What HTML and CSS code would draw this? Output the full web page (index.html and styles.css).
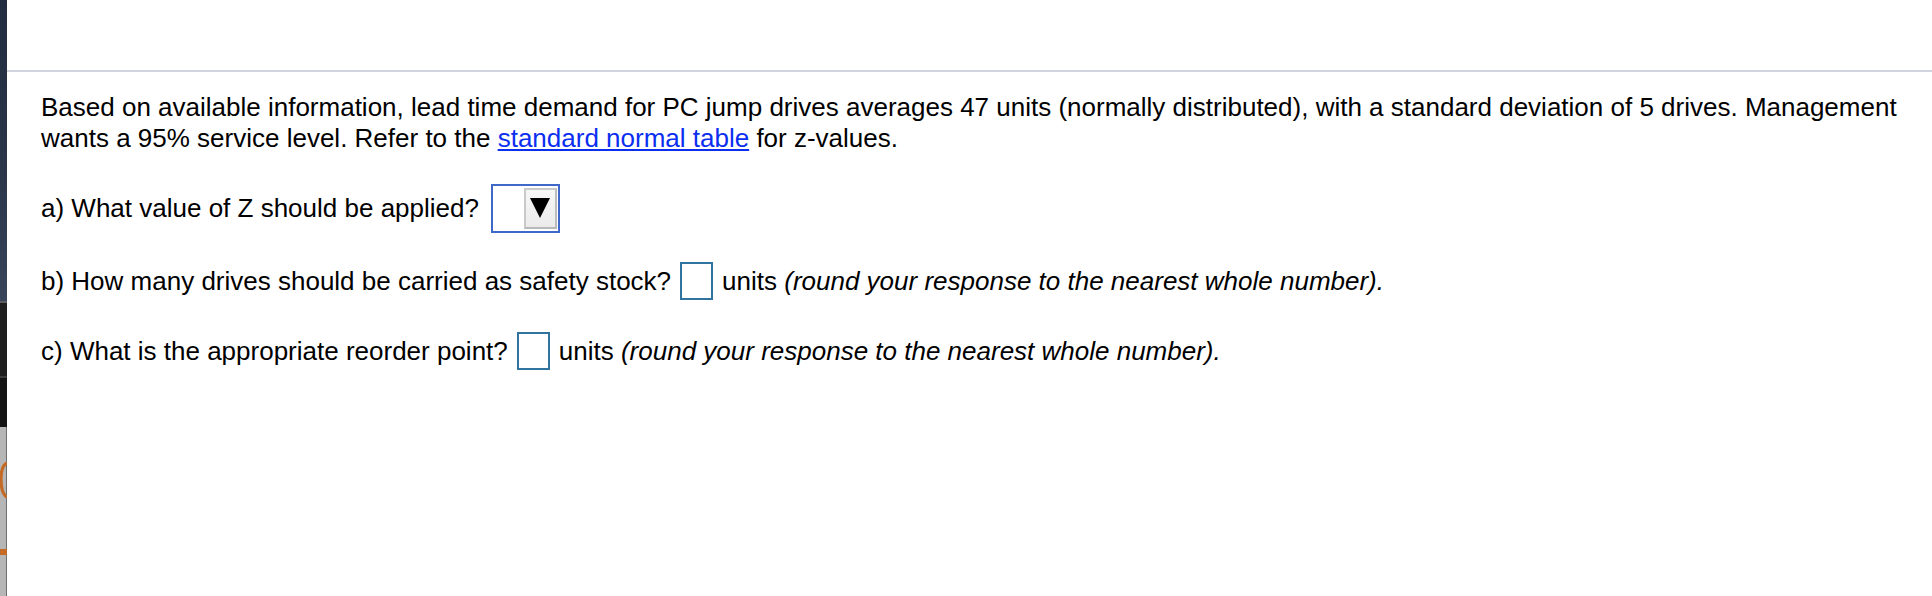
FILE: index.html
```html
<!DOCTYPE html>
<html lang="en">
<head>
<meta charset="utf-8">
<title>Safety stock question</title>
<link rel="stylesheet" href="styles.css">
</head>
<body>
<div class="page">
  <aside class="strip">
    <div class="seg seg-navy"></div>
    <div class="seg seg-sep"></div>
    <div class="seg seg-dark"></div>
    <div class="seg seg-sep2"></div>
    <div class="seg seg-darker"></div>
    <div class="seg seg-gray">
      <svg class="strip-art" width="7" height="169" viewBox="0 0 7 169">
        <path d="M7 36 C3 38 1 44 1 52 C1 62 3 68 7 70" fill="none" stroke="#c46a24" stroke-width="3.2"/>
        <rect x="0" y="122" width="7" height="6" fill="#c46a24"/>
      </svg>
    </div>
  </aside>
  <main class="main">
    <div class="topbar"></div>
    <div class="content">
      <p class="intro">Based on available information, lead time demand for PC jump drives averages 47 units (normally distributed), with a standard deviation of 5 drives. Management wants a 95% service level. Refer to the <a href="#" class="link">standard normal table</a> for z-values.</p>
      <div class="row row-a">
        <span>a) What value of Z should be applied?</span>
        <span class="dropdown"><span class="drop-btn"><span class="tri"></span></span></span>
      </div>
      <div class="row row-b">
        <span>b) How many drives should be carried as safety stock?</span>
        <span class="box"></span>
        <span>units <em>(round your response to the nearest whole number).</em></span>
      </div>
      <div class="row row-c">
        <span>c) What is the appropriate reorder point?</span>
        <span class="box"></span>
        <span>units <em>(round your response to the nearest whole number).</em></span>
      </div>
    </div>
  </main>
</div>
</body>
</html>
```

FILE: styles.css
```css
html, body {
  margin: 0;
  padding: 0;
  background: #ffffff;
}

.page {
  display: flex;
  height: 596px;
  width: 1932px;
  overflow: hidden;
  font-family: "Liberation Sans", Arial, Helvetica, sans-serif;
  font-size: 26px;
  line-height: 31px;
  color: #000;
}

.strip {
  width: 7px;
  flex: none;
  display: flex;
  flex-direction: column;
}

.seg-navy {
  height: 301px;
  background: linear-gradient(180deg, #222c40 0%, #2b364b 60%, #37445a 100%);
}
.seg-sep { height: 2px; background: #5b5d61; }
.seg-dark { height: 73px; background: #1e1e1f; }
.seg-sep2 { height: 2px; background: #3c3c3c; }
.seg-darker { height: 49px; background: #131313; }
.seg-gray {
  flex: 1;
  background: #b6b6b6;
  box-shadow: inset -1px 0 0 #6f6f6f;
}
.strip-art { display: block; }

.main {
  flex: 1;
  display: flex;
  flex-direction: column;
}

.topbar {
  height: 70px;
  flex: none;
  border-bottom: 2px solid #d2d5df;
}

.content {
  padding: 20px 20px 0 34px;
}

.intro {
  margin: 0;
}

.link {
  color: #0b2ef0;
  text-decoration: underline;
}

.row {
  display: flex;
  align-items: center;
  gap: 9px;
  white-space: nowrap;
}

.row-a { margin-top: 30px; }
.row-b { margin-top: 29px; }
.row-c { margin-top: 32px; }

.dropdown {
  margin-left: 3px;
  box-sizing: border-box;
  width: 69px;
  height: 49px;
  border: 2px solid #3f69c8;
  display: flex;
  justify-content: flex-end;
  align-items: center;
  background: #fff;
}

.drop-btn {
  box-sizing: border-box;
  width: 33px;
  height: 41px;
  margin-right: 1px;
  border: 2px solid #c9c9c9;
  border-right-color: #bdbdbd;
  border-bottom-color: #b9b9b9;
  background: linear-gradient(180deg, #f7f7f7 0%, #ebebeb 100%);
  display: flex;
  justify-content: center;
  padding-top: 8px;
}

.tri {
  width: 0;
  height: 0;
  border-left: 10px solid transparent;
  border-right: 10px solid transparent;
  border-top: 20px solid #000;
}

.box {
  box-sizing: border-box;
  width: 33px;
  height: 38px;
  border: 2px solid #31739f;
  background: #fff;
}
```
